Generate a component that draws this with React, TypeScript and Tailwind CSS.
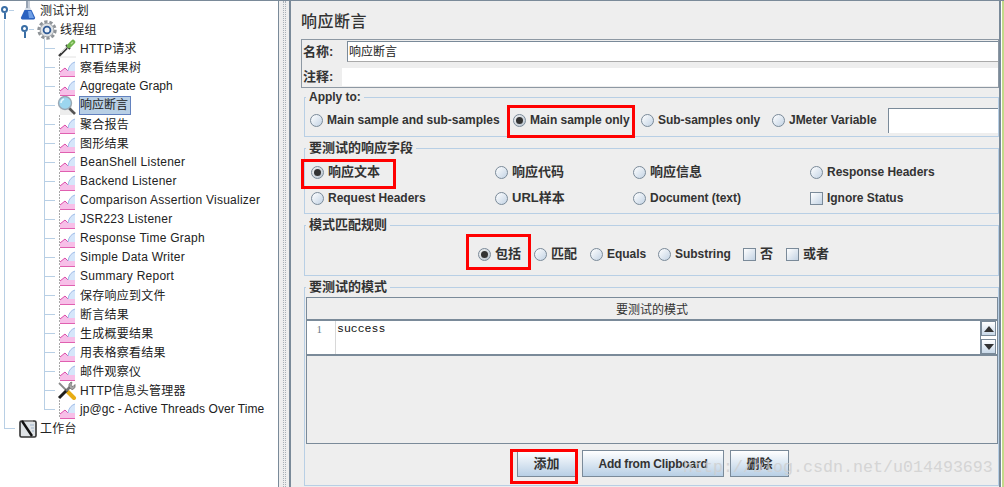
const sans = "font-['Liberation_Sans','Noto_Sans_CJK_SC',sans-serif]";

function Flask() {
  return (
    <svg width="16" height="19" viewBox="0 0 16 19" className="shrink-0">
      <path d="M6 0h4v6l5 10.5q.5 2-1.500 2H2.500Q.5 18.500 1 16.500L6 6z" fill="#d3dbe6" />
      <path d="M4.500 9h7l3.500 7.500q.5 2-1.500 2h-11q-2 0-1.500-2z" fill="#2a62c0" />
      <path d="M8 10h3l3 7H9z" fill="#6f9fe6" />
      <path d="M6 0h4v7H6z" fill="#97a3b3" />
      <path d="M8 0h2v7H8z" fill="#c6ced9" />
    </svg>
  );
}

function Gear() {
  return (
    <svg width="20" height="20" viewBox="0 0 20 20" className="shrink-0 -ml-[3px]">
      <circle cx="10" cy="10" r="8.200" fill="none" stroke="#8f9499" strokeWidth="3" strokeDasharray="3.200 1.900" />
      <circle cx="10" cy="10" r="6.800" fill="#dfe2e5" stroke="#a3a7ab" />
      <circle cx="10" cy="10" r="3.400" fill="#eef3f9" stroke="#2f5a96" strokeWidth="1.800" />
    </svg>
  );
}

function Dropper() {
  return (
    <svg width="20" height="19" viewBox="0 0 20 19" className="shrink-0 -ml-[3px]">
      <path d="M2 18h17" stroke="#e2e2e2" />
      <path d="M2 17L10 9" stroke="#3a3a3a" strokeWidth="2.400" />
      <path d="M4 14l5-5" stroke="#c9c9c9" />
      <path d="M9 6l4 4" stroke="#333" strokeWidth="2" />
      <path d="M12 7l4-4" stroke="#6fb24c" strokeWidth="4.500" strokeLinecap="round" />
      <path d="M14 5l2-2" stroke="#b4de93" strokeWidth="1.500" />
    </svg>
  );
}

function Chart() {
  return (
    <svg width="19" height="19" viewBox="0 0 19 19" className="shrink-0 -ml-[3px]">
      <path d="M2.500 0v18" stroke="#a8a8a8" strokeDasharray="2 1" />
      <path d="M3 18V14l5-4 3 3 1-3q3-6 6-6v14z" fill="#f7bfe8" />
      <path d="M11 13l1-3q3-6 6-6v9z" fill="#d5e6fa" />
      <path d="M3 14l5-4 3 3" fill="none" stroke="#dc4aa8" />
      <path d="M11 13q1-7 7-9" fill="none" stroke="#9cbde8" />
      <path d="M3 18.500h15" stroke="#e060b0" />
    </svg>
  );
}

function Magnifier() {
  return (
    <svg width="20" height="19" viewBox="0 0 20 19" className="shrink-0 -ml-[3px]">
      <rect x="3" y="5" width="12" height="14" fill="#ededed" />
      <path d="M12 12l6 6" stroke="#555" strokeWidth="2.600" />
      <circle cx="8" cy="7" r="6.500" fill="#9cd6ef" stroke="#9aa7b3" strokeWidth="1.400" />
      <path d="M4 7q0-3 3-4" fill="none" stroke="#e4f6fd" strokeWidth="1.500" />
    </svg>
  );
}

function Tools() {
  return (
    <svg width="20" height="19" viewBox="0 0 20 19" className="shrink-0 -ml-[3px]">
      <path d="M2 2l8 8" stroke="#8a8a8a" strokeWidth="1.800" />
      <path d="M10 10l7 7" stroke="#e8ad14" strokeWidth="4" strokeLinecap="round" />
      <path d="M2 17L10 9" stroke="#1e1e1e" strokeWidth="3" />
      <path d="M9 10l5-5" stroke="#777" strokeWidth="2.600" />
      <path d="M12 6q-1-3 2-5l1 .5-1 3 2 1 2-2q1 3-2 5-2 .5-4-2.500z" fill="#a8a8a8" stroke="#555" strokeWidth=".6" />
    </svg>
  );
}

function Notebook() {
  return (
    <svg width="18" height="19" viewBox="0 0 18 19" className="shrink-0 -ml-px">
      <rect x="1" y="2" width="16" height="16" rx="1.500" fill="#dfe3e6" stroke="#333" strokeWidth="1.600" />
      <path d="M4 1h10v2H4z" fill="#888" />
      <path d="M3 2l10 15" stroke="#111" strokeWidth="2.400" />
      <path d="M11 6h4M12 9h3M13 12h2" stroke="#9fb4cc" />
    </svg>
  );
}

function Guide() {
  return (
    <div className="w-5 h-full pl-1 shrink-0">
      <div className="w-px h-full bg-[#b8cfe5]" />
    </div>
  );
}

function Branch({ last }: { last?: boolean }) {
  return (
    <div className="w-5 h-full pl-1 shrink-0 flex items-center">
      <div className={last ? "w-px h-[10px] self-start bg-[#b8cfe5]" : "w-px h-full bg-[#b8cfe5]"} />
      <div className="w-[10px] h-px bg-[#b8cfe5]" />
    </div>
  );
}

function Handle() {
  return (
    <div className="w-5 h-full shrink-0 flex items-center">
      <div className="w-[9px] flex flex-col items-center self-stretch justify-center">
        <div className="w-[7px] h-[7px] rounded-full border-2 border-[#3a6ea5] mt-[3px] shrink-0" />
        <div className="w-0.5 h-[6px] bg-[#3a6ea5] shrink-0" />
      </div>
      <div className="w-[5px] h-px bg-[#b8cfe5]" />
    </div>
  );
}

function TreeRow({ cells, icon, label, selected, tight }: { cells: React.ReactNode; icon: React.ReactNode; label: string; selected?: boolean; tight?: boolean }) {
  const latin = /^[\x00-\x7f]+$/.test(label);
  return (
    <div className="h-[19px] flex items-center">
      {cells}
      <div className="w-5 h-full shrink-0 flex items-center">{icon}</div>
      {selected ? (
        <span className="h-full -ml-px pr-[2px] leading-[17px] bg-[#b8cfe5] border border-[#6382bf] text-[#222]">{label}</span>
      ) : (
        <span className={"whitespace-nowrap text-[#222] " + (tight ? "tracking-[0.05px] " : "tracking-[0.25px] ") + (latin ? "pb-[2px]" : "")}>{label}</span>
      )}
    </div>
  );
}

const leaves: { label: string; icon: "chart" | "dropper" | "glass" | "tools"; selected?: boolean; tight?: boolean }[] = [
  { label: "HTTP请求", icon: "dropper" },
  { label: "察看结果树", icon: "chart" },
  { label: "Aggregate Graph", icon: "chart", tight: true },
  { label: "响应断言", icon: "glass", selected: true },
  { label: "聚合报告", icon: "chart" },
  { label: "图形结果", icon: "chart" },
  { label: "BeanShell Listener", icon: "chart" },
  { label: "Backend Listener", icon: "chart" },
  { label: "Comparison Assertion Visualizer", icon: "chart" },
  { label: "JSR223 Listener", icon: "chart" },
  { label: "Response Time Graph", icon: "chart" },
  { label: "Simple Data Writer", icon: "chart" },
  { label: "Summary Report", icon: "chart" },
  { label: "保存响应到文件", icon: "chart" },
  { label: "断言结果", icon: "chart" },
  { label: "生成概要结果", icon: "chart" },
  { label: "用表格察看结果", icon: "chart" },
  { label: "邮件观察仪", icon: "chart" },
  { label: "HTTP信息头管理器", icon: "tools" },
  { label: "jp@gc - Active Threads Over Time", icon: "chart", tight: true },
];

function leafIcon(kind: string) {
  if (kind === "dropper") return <Dropper />;
  if (kind === "glass") return <Magnifier />;
  if (kind === "tools") return <Tools />;
  return <Chart />;
}

function Tree() {
  return (
    <div className="w-[279px] shrink-0 bg-white border-r border-[#7a8a99] text-[12px]">
      <TreeRow cells={<Handle />} icon={<Flask />} label="测试计划" />
      <TreeRow cells={<><Guide /><Handle /></>} icon={<Gear />} label="线程组" />
      {leaves.map((l, i) => (
        <TreeRow
          key={l.label}
          cells={<><Guide /><div className="w-5 shrink-0" /><Branch last={i === leaves.length - 1} /></>}
          icon={leafIcon(l.icon)}
          label={l.label}
          selected={l.selected}
          tight={l.tight}
        />
      ))}
      <TreeRow cells={<Branch last />} icon={<Notebook />} label="工作台" />
    </div>
  );
}

// CJK labels sit a pixel larger than latin ones in the swing theme
function labelSize(label: string) {
  return /[^\x00-\x7f]/.test(label) ? "text-[13px]" : "text-[12px] tracking-[-0.03px]";
}

function Radio({ label, on }: { label: string; on?: boolean }) {
  return (
    <label className={"flex items-center gap-1 whitespace-nowrap font-bold text-[#333] " + labelSize(label)}>
      <span className={"w-[13px] h-[13px] rounded-full border border-[#7a8a99] flex items-center justify-center shrink-0 bg-gradient-to-br " + (on ? "from-[#f2f2f2] to-[#b8c4d0]" : "from-white to-[#c3d3e4]")}>
        {on && <span className="w-[7px] h-[7px] rounded-full bg-[#333]" />}
      </span>
      {label}
    </label>
  );
}

function Check({ label }: { label: string }) {
  return (
    <label className={"flex items-center gap-1 whitespace-nowrap font-bold text-[#333] " + labelSize(label)}>
      <span className="w-[13px] h-[13px] border border-[#7a8a99] shrink-0 bg-gradient-to-br from-white to-[#c3d3e4]" />
      {label}
    </label>
  );
}

function Group({ title, className, children }: { title: string; className: string; children: React.ReactNode }) {
  return (
    <fieldset className={"border border-[#b8cfe5] " + className}>
      <legend className={"ml-px px-[3px] h-4 leading-4 font-bold text-[#333] " + labelSize(title)}>{title}</legend>
      {children}
    </fieldset>
  );
}

function Btn({ label, w }: { label: string; w: string }) {
  const size = /[^\x00-\x7f]/.test(label) ? "text-[13px]" : "text-[12px] tracking-[-0.2px]";
  return (
    <button className={"h-[27px] font-bold text-[#333] border border-[#7a8a99] bg-gradient-to-b from-white to-[#b8cfe5] " + size + " " + w}>
      {label}
    </button>
  );
}

function Arrow({ up }: { up?: boolean }) {
  return (
    <div className="h-[15px] flex items-center justify-center border border-[#7a8a99] bg-gradient-to-b from-white to-[#c8d8e8]">
      <svg width="10" height="6" viewBox="0 0 10 6">
        <path d={up ? "M0 6L5 0l5 6z" : "M0 0h10L5 6z"} fill="#333" />
      </svg>
    </div>
  );
}

function PatternTable() {
  return (
    <div className="ml-px mt-0.5 h-[147px] border border-[#7a8a99] flex flex-col">
      <div className="h-[23px] pt-[2px] shrink-0 flex items-center justify-center text-[12px] text-[#333] border-b-2 border-[#7a8a99]">要测试的模式</div>
      <div className="h-[35px] shrink-0 flex bg-white border-b-2 border-[#7a8a99]">
        <div className="w-[29px] shrink-0 border-r border-[#d8d8d8] text-right pr-[13px] pt-[1px] text-[11px] leading-[14px] text-[#6a7a8a] font-['Liberation_Serif',serif]">1</div>
        <div className="flex-1 pl-px pt-[1px] text-[11.5px] leading-[14px] text-[#111] font-['Liberation_Mono',monospace]">success</div>
        <div className="w-[16px] mr-px shrink-0 flex flex-col justify-between border-l border-[#7a8a99]">
          <Arrow up />
          <Arrow />
        </div>
      </div>
    </div>
  );
}

function RedBox({ className }: { className: string }) {
  return <div className={"absolute border-[3px] border-[#f00] pointer-events-none " + className} />;
}

export default function App() {
  return (
    <div className={"relative w-[1004px] h-[487px] overflow-hidden flex bg-white border-t border-[#7a8a99] " + sans}>
      <Tree />
      <div className="w-[10px] shrink-0 bg-[#eeeeee] pl-[4px]">
        <div className="w-[3px] h-full border-x border-dotted border-[#a8b0b8]" />
      </div>
      <div className="w-[712px] shrink-0 bg-[#eeeeee] border-x-2 border-[#7a8a99] pl-[10px] flex flex-col">
        <h1 className="h-[38px] shrink-0 pt-1 flex items-center text-[16px] tracking-[0.5px] font-medium text-[#333]">响应断言</h1>
        <div className="h-[49px] shrink-0 border border-[#8d98a3] flex flex-col">
          <div className="h-[27px] shrink-0 flex items-start pt-px">
            <span className="w-[45px] pl-px shrink-0 font-bold text-[13px] leading-[21px] text-[#333]">名称:</span>
            <input readOnly value="响应断言" className="flex-1 min-w-0 h-[21px] bg-white border-t border-l border-[#7a8a99] border-b border-b-[#aaa] pl-px pb-[2px] text-[12px] text-[#222]" />
          </div>
          <div className="flex-1 flex items-center">
            <span className="w-[40px] pl-px shrink-0 font-bold text-[13px] text-[#333]">注释:</span>
            <div className="flex-1 h-[18px] bg-white" />
          </div>
        </div>
        <div className="h-px shrink-0" />
        <div className="pl-[3px] flex flex-col">
          <Group title="Apply to:" className="h-[48px]">
            <div className="h-[30px] pl-[5px] grid grid-cols-[203px_128px_131px_116px_1fr] items-center">
              <Radio label="Main sample and sub-samples" />
              <Radio label="Main sample only" on />
              <Radio label="Sub-samples only" />
              <Radio label="JMeter Variable" />
              <div className="h-[25px] bg-white border-t border-l border-[#7a8a99]" />
            </div>
          </Group>
          <Group title="要测试的响应字段" className="h-[74px] mt-[3px]">
            <div className="pt-[3px] pl-[6px] grid grid-cols-[184px_138px_177px_1fr] auto-rows-[26px] items-center">
              <Radio label="响应文本" on />
              <Radio label="响应代码" />
              <Radio label="响应信息" />
              <Radio label="Response Headers" />
              <Radio label="Request Headers" />
              <Radio label="URL样本" />
              <Radio label="Document (text)" />
              <Check label="Ignore Status" />
            </div>
          </Group>
          <Group title="模式匹配规则" className="h-[59px] mt-[3px]">
            <div className="h-[42px] pl-[173px] grid grid-cols-[56px_56px_68px_85px_43px_1fr] items-center">
              <Radio label="包括" on />
              <Radio label="匹配" />
              <Radio label="Equals" />
              <Radio label="Substring" />
              <Check label="否" />
              <Check label="或者" />
            </div>
          </Group>
          <Group title="要测试的模式" className="h-[207px] mt-[3px]">
            <PatternTable />
            <div className="mt-1.5 pl-[212px] flex gap-1.5">
              <Btn label="添加" w="w-[59px]" />
              <Btn label="Add from Clipboard" w="w-[142px]" />
              <Btn label="删除" w="w-[59px]" />
            </div>
          </Group>
        </div>
      </div>
      <div className="w-px shrink-0 bg-white" />
      <div className="w-0.5 shrink-0 bg-[#c3d98a]" />

      <RedBox className="left-[507px] top-[104px] w-[128px] h-[33px]" />
      <RedBox className="left-[301px] top-[158px] w-[95px] h-[30px]" />
      <RedBox className="left-[466px] top-[233px] w-[65px] h-[36px]" />
      <RedBox className="left-[510px] top-[448px] w-[68px] h-[35px]" />
      <span className="absolute left-[683px] top-[457px] text-[16.67px] leading-5 text-[#cfcfcf] opacity-80 font-['Liberation_Mono',monospace] whitespace-nowrap pointer-events-none">http://blog.csdn.net/u014493693</span>
    </div>
  );
}
